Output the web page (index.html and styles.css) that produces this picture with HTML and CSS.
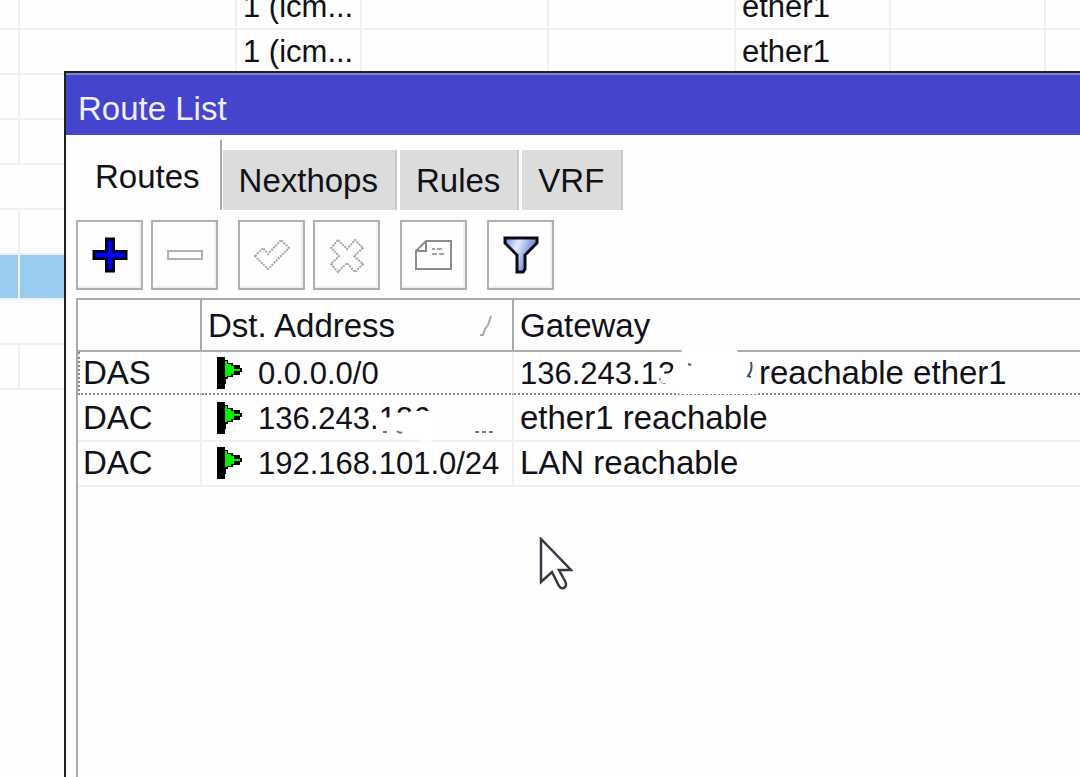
FILE: index.html
```html
<!DOCTYPE html>
<html lang="en">
<head>
    <meta charset="UTF-8">
    <title>Route List</title>
    <link rel="stylesheet" href="styles.css">
</head>
<body>
<div class="desktop">
    <!-- list behind the window -->
    <table class="back-list">
        <colgroup>
            <col class="b-mark"><col class="b-name"><col class="b-proto"><col class="b-wide"><col class="b-wide"><col class="b-port"><col class="b-port"><col>
        </colgroup>
        <tbody>
        <tr><td></td><td></td><td>1 (icm...</td><td></td><td></td><td>ether1</td><td></td><td></td></tr>
        <tr><td></td><td></td><td>1 (icm...</td><td></td><td></td><td>ether1</td><td></td><td></td></tr>
        <tr><td></td><td></td><td></td><td></td><td></td><td></td><td></td><td></td></tr>
        <tr><td></td><td></td><td></td><td></td><td></td><td></td><td></td><td></td></tr>
        <tr><td colspan="8"></td></tr>
        <tr><td></td><td></td><td></td><td></td><td></td><td></td><td></td><td></td></tr>
        <tr class="picked"><td></td><td></td><td></td><td></td><td></td><td></td><td></td><td></td></tr>
        <tr><td colspan="8"></td></tr>
        <tr><td></td><td></td><td></td><td></td><td></td><td></td><td></td><td></td></tr>
        </tbody>
    </table>

    <div class="window">
        <h1 class="window-title">Route List</h1>
        <div class="tabs" role="tablist">
            <button type="button" role="tab" aria-selected="true" class="tab active">Routes</button>
            <button type="button" role="tab" class="tab">Nexthops</button>
            <button type="button" role="tab" class="tab">Rules</button>
            <button type="button" role="tab" class="tab">VRF</button>
        </div>
        <div class="toolbar">
            <div class="tool-group">
                <button type="button" class="tool" aria-label="Add">
                    <svg width="36" height="36" viewBox="0 0 36 36"><path d="M13 .5h10V13h12.5v10H23v12.500H13V23H.5V13H13z" fill="#000"/><path d="M15.500 3.500h5v12h12v5h-12v12h-5v-12h-12v-5h12z" fill="#0000f4"/></svg>
                </button>
                <button type="button" class="tool" aria-label="Remove">
                    <svg width="36" height="36" viewBox="0 0 36 36"><path d="M1 14h34v8H1z" fill="none" stroke="#b0b0b0" stroke-width="2"/></svg>
                </button>
            </div>
            <div class="tool-group">
                <button type="button" class="tool" aria-label="Enable">
                    <svg width="36" height="36" viewBox="0 0 36 36"><path d="M1 19l8-8 5 6L27 3l8 8-21 21z" fill="none" stroke="#a4a4a4" stroke-width="2" stroke-dasharray="2 1"/></svg>
                </button>
                <button type="button" class="tool" aria-label="Disable">
                    <svg width="36" height="36" viewBox="0 0 36 36"><path d="M9 3l9 9 8-9 8 8-9 8 9 8-8 8-8-9-9 9-7-8 8-8-8-8z" fill="none" stroke="#a4a4a4" stroke-width="2" stroke-dasharray="2 1"/></svg>
                </button>
            </div>
            <div class="tool-group">
                <button type="button" class="tool" aria-label="Comment">
                    <svg width="40" height="36" viewBox="0 0 40 36"><path d="M12 4h25v28H2V14z M12 4v10H2" fill="none" stroke="#8c8c8c" stroke-width="2"/><path d="M18 12h3M23 12h5M18 17h5M25 17h5" stroke="#a4a4a4" stroke-width="2"/></svg>
                </button>
            </div>
            <div class="tool-group">
                <button type="button" class="tool" aria-label="Filter">
                    <svg width="36" height="38" viewBox="0 0 36 38">
                        <defs><linearGradient id="steel" x2="1" y2=".4"><stop offset=".1" stop-color="#8ca4e0"/><stop offset=".4" stop-color="#e4ecff"/><stop offset=".8" stop-color="#8298dc"/></linearGradient></defs>
                        <path d="M2 2h32v5L22 19v14l-2 3h-6V19L2 7z" fill="url(#steel)" stroke="#0a0a14" stroke-width="3"/>
                    </svg>
                </button>
            </div>
        </div>

        <div class="list-area">
            <table class="routes">
                <colgroup><col class="r-flags"><col class="r-dst"><col></colgroup>
                <thead>
                <tr>
                    <th></th>
                    <th><div class="sorted">Dst. Address
                        <svg width="14" height="22" viewBox="0 0 14 22"><path d="M1 20h3l2-6 3-4 3-9" fill="none" stroke="#aaa" stroke-width="2"/></svg></div></th>
                    <th>Gateway</th>
                </tr>
                </thead>
                <tbody>
                <tr class="focused">
                    <td>DAS</td>
                    <td><svg class="flag" viewBox="0 0 26 32"><path d="M0 0h8v3h3v3h5v2h7v3h2v4h-2v3h-7v2h-5v2H9v5H8v5H0z"/><path d="M8 4h2v3h4v2h3v3h6v2h-6v3h-3v2h-4v1H8z" fill="#00f000"/></svg><span class="ip">0.0.0.0/0</span></td>
                    <td><span class="hidden-ip"><span class="ip">136.243.13</span><svg width="240" height="56" viewBox="0 0 240 56">
                        <path d="M159 8L166 0h48q3 4 8 12q8 8 10 14l6 12v10h-79V38q-9 2-19-2l1-8 10-1 3-7h1z" fill="#fff"/>
                        <path d="M168 18l3 1M231 16q2 8-3 14l3 1" fill="none" stroke="#445566" stroke-width="2"/></svg></span>reachable ether1</td>
                </tr>
                <tr class="below-focused">
                    <td>DAC</td>
                    <td><svg class="flag" viewBox="0 0 26 32"><path d="M0 0h8v3h3v3h5v2h7v3h2v4h-2v3h-7v2h-5v2H9v5H8v5H0z"/><path d="M8 4h2v3h4v2h3v3h6v2h-6v3h-3v2h-4v1H8z" fill="#00f000"/></svg><span class="hidden-dst"><span class="ip">136.243.136</span><svg width="256" height="46" viewBox="0 0 256 46">
                        <path d="M118 18q14 3 21-4 8 3 14-2h24v28q-8 5-16 1-22-5-28-6-8-1-15-1z" fill="#fff"/>
                        <path d="M125 33h4M139 32q3 3 5 1M217 33h4M224 33h4M231 33h4" fill="none" stroke="#777" stroke-width="2"/></svg></span></td>
                    <td>ether1 reachable</td>
                </tr>
                <tr>
                    <td>DAC</td>
                    <td><svg class="flag" viewBox="0 0 26 32"><path d="M0 0h8v3h3v3h5v2h7v3h2v4h-2v3h-7v2h-5v2H9v5H8v5H0z"/><path d="M8 4h2v3h4v2h3v3h6v2h-6v3h-3v2h-4v1H8z" fill="#00f000"/></svg><span class="ip">192.168.101.0/24</span></td>
                    <td>LAN reachable</td>
                </tr>
                </tbody>
            </table>
        </div>
    </div>

    <svg class="pointer" width="34" height="54" viewBox="0 0 34 54"><path d="M2 2v43l11-10 7 14q3 4 6 1 2-2 0-6l-6-11h12z" fill="#fff" stroke="#383844" stroke-width="2.500"/></svg>
</div>
</body>
</html>
```

FILE: styles.css
```css
body {
    margin: 0;
    background: #fefefe;
    color: #111118;
    font-family: "Liberation Sans", Arial, sans-serif;
    font-size: 33px;
}
.desktop {
    position: relative;
    height: 100vh;
    overflow: hidden;
}
table {
    width: 100%;
    table-layout: fixed;
    border-collapse: separate;
    border-spacing: 0;
}
td, th {
    padding: 0;
    font-weight: normal;
    text-align: left;
    white-space: nowrap;
}

/* list behind the window */
.back-list {
    margin-top: -15px;
    font-size: 31px;
}
.back-list td {
    height: 43px;
    line-height: 43px;
    padding-left: 6px;
    border-right: 2px solid #f0f0f0;
    border-bottom: 2px solid #f0f0f0;
}
.back-list td:last-child {
    border-right: 0;
}
.back-list .picked td {
    background: #99ccee;
}
.b-mark { width: 20px; }
.b-name { width: 217px; }
.b-proto { width: 125px; }
.b-wide { width: 187px; }
.b-port { width: 155px; }

/* window */
.window {
    position: absolute;
    top: 71px;
    right: 0;
    bottom: 0;
    left: 64px;
    display: flex;
    flex-direction: column;
    background: #fefefe;
    border: solid #202020;
    border-width: 2px 0 0 2px;
}
.window-title {
    margin: 0;
    padding: 7px 0 0 12px;
    line-height: 53px;
    font-size: 33px;
    font-weight: normal;
    color: #eeeeff;
    background: #4444cc;
    border-top: 2px solid #8282cc;
}
.tabs {
    display: flex;
    align-items: flex-end;
    gap: 3px;
    padding-top: 5px;
}
.tab {
    height: 60px;
    padding: 2px 17px 0 16px;
    line-height: 58px;
    border: 0;
    border-right: 2px solid #c8c8c8;
    background: #dcdcdc;
    color: inherit;
    font-family: inherit;
    font-size: 33px;
}
.tab.active {
    height: 70px;
    padding: 4px 20px 0 29px;
    margin-right: -2px;
    line-height: 66px;
    border-color: #aaaaaa;
    background: none;
}
.toolbar {
    display: flex;
    gap: 20px;
    padding: 10px 10px 8px;
}
.tool-group {
    display: flex;
    gap: 8px;
}
.tool {
    display: flex;
    align-items: center;
    justify-content: center;
    width: 67px;
    height: 70px;
    padding: 0;
    background: #fefefe;
    border: 2px solid #b0b0b0;
    box-shadow: inset -2px -2px 0 #f0f0f0;
}

/* route table */
.list-area {
    flex: 1;
    margin-left: 10px;
    border: solid #aaaaaa;
    border-width: 2px 0 0 2px;
}
.r-flags { width: 124px; }
.r-dst { width: 312px; }
.routes th {
    height: 48px;
    line-height: 48px;
    padding: 2px 0 0 6px;
    border-right: 2px solid #aaaaaa;
    border-bottom: 2px solid #aaaaaa;
}
.routes td {
    height: 41px;
    line-height: 41px;
    padding: 0 0 2px 6px;
    border-right: 2px solid #f0f0f0;
    border-bottom: 2px solid #f0f0f0;
}
.routes td:first-child {
    padding-left: 5px;
}
.routes th:last-child,
.routes td:last-child {
    border-right: 0;
}
.routes .focused td {
    padding-bottom: 0;
    border-bottom: 2px dotted #8c8c80;
}
.routes .focused td:first-child {
    padding-left: 3px;
    border-left: 2px dotted #8c8c80;
}
.routes .below-focused td {
    padding-top: 2px;
}
.sorted {
    display: flex;
    align-items: center;
    justify-content: space-between;
    padding-right: 19px;
}
.flag {
    width: 26px;
    height: 32px;
    margin: 0 15px 0 9px;
    vertical-align: -5px;
}
.ip {
    font-size: 31px;
    line-height: 1;
}
/* addresses that are partly wiped out */
.hidden-ip {
    position: relative;
    display: inline-block;
    width: 239px;
}
.hidden-dst {
    position: relative;
}
.hidden-ip svg,
.hidden-dst svg {
    position: absolute;
    top: -6px;
    left: 0;
}
.hidden-dst svg {
    top: 0;
}

.pointer {
    position: absolute;
    top: 537px;
    left: 539px;
}
```
